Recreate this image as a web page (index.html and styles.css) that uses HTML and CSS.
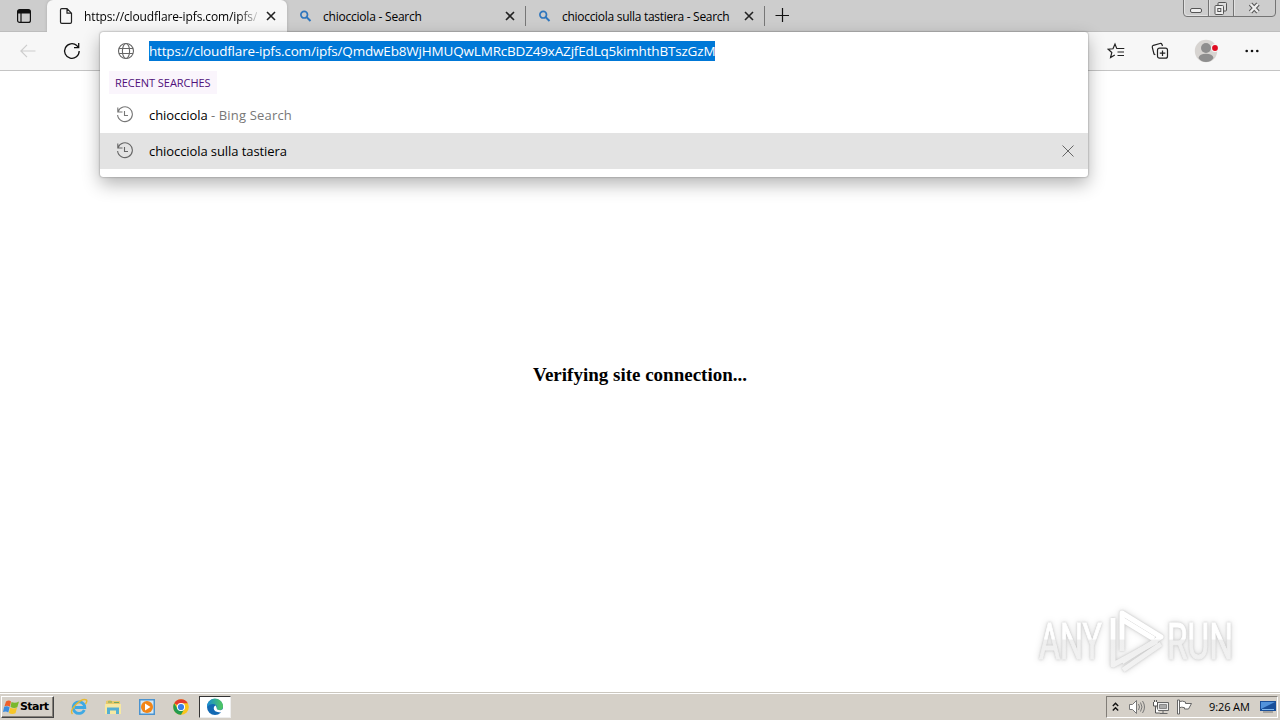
FILE: index.html
```html
<!DOCTYPE html>
<html lang="en">
<head>
<meta charset="utf-8">
<title>Browser desktop</title>
<link rel="stylesheet" href="styles.css">
</head>
<body>
<div class="desktop">
  <header class="tabstrip">
    <div class="tab-actions"><svg width="16" height="16" viewBox="0 0 16 16" fill="none" stroke="#111" stroke-width="1.2"><rect x="1.6" y="1.6" width="12.8" height="12.8" rx="2"/><path d="M2 3h12M2 4.600h12" stroke-width="2"/><path d="M5 5v9"/></svg></div>
    <div class="tab tab-active">
      <svg class="tab-icon" width="14" height="16" viewBox="0 0 14 16" fill="none" stroke="#222" stroke-width="1.2"><path d="M1.500 2q0-1.300 1.300-1.300H8L12.500 5.200V14q0 1.300-1.300 1.300H2.800Q1.500 15.300 1.500 14zM8 .8V5.200h4.400"/></svg>
      <span class="tab-title title-url">https://cloudflare-ipfs.com/ipfs/</span>
      <svg class="tab-close" width="10" height="10" viewBox="0 0 10 10" stroke="#222" stroke-width="1.600"><path d="M1 1l8 8M9 1l-8 8"/></svg>
    </div>
    <div class="tab tab-second">
      <svg class="tab-icon" width="12" height="12" viewBox="0 0 12 12" fill="none" stroke="#2f76bd" stroke-width="1.700"><circle cx="4.200" cy="4.700" r="3.300"/><path d="M6.500 7l4 4" stroke-width="2"/></svg>
      <span class="tab-title title-one">chiocciola - Search</span>
      <svg class="tab-close" width="10" height="10" viewBox="0 0 10 10" stroke="#222" stroke-width="1.600"><path d="M1 1l8 8M9 1l-8 8"/></svg>
    </div>
    <div class="tab tab-third">
      <svg class="tab-icon" width="12" height="12" viewBox="0 0 12 12" fill="none" stroke="#2f76bd" stroke-width="1.700"><circle cx="4.200" cy="4.700" r="3.300"/><path d="M6.500 7l4 4" stroke-width="2"/></svg>
      <span class="tab-title title-two">chiocciola sulla tastiera - Search</span>
      <svg class="tab-close" width="10" height="10" viewBox="0 0 10 10" stroke="#222" stroke-width="1.600"><path d="M1 1l8 8M9 1l-8 8"/></svg>
    </div>
    <svg class="new-tab" width="14" height="14" viewBox="0 0 14 14" stroke="#111" stroke-width="1.200"><path d="M7.500 0v14M.5 7.500h13.500"/></svg>
    <svg class="window-buttons" width="94" height="18" viewBox="0 0 94 18" fill="none" stroke="#747474"><path d="M.5 0v13q0 3.500 3.500 3.500h85q3.500 0 3.500-3.500V0M25.500 0v16M50.500 0v16"/><path d="M1.500 0v12q0 3.500 3 3.500h20M26.500 0v15.500M51.500 0v15.500" stroke="#e2e2e2"/><rect x="7.500" y="8.500" width="11" height="4" rx="1.500" stroke="#555" fill="#eee"/><g stroke="#555"><rect x="35" y="2.500" width="8.500" height="8.500" rx="1" fill="#ddd"/><rect x="32" y="5.500" width="8.500" height="9" rx="1" fill="#eee"/><rect x="34.800" y="8.500" width="3" height="3"/></g><path d="M67.500 4l7.500 8M75 4l-7.500 8" stroke="#555" stroke-width="4.400"/><path d="M67.500 4l7.500 8M75 4l-7.500 8" stroke="#eee" stroke-width="2.400"/></svg>
  </header>

  <nav class="toolbar">
    <svg class="back" width="16" height="14" viewBox="0 0 16 14" fill="none" stroke="#cdcdcd" stroke-width="1.200"><path d="M7 .8L.9 7 7 13.200M1 7h14.500"/></svg>
    <svg class="reload" width="18" height="18" viewBox="0 0 18 18" fill="none" stroke="#111" stroke-width="1.300"><path d="M16.200 9a7.300 7.300 0 1 1-2.400-5.400L15.500 5.500M15.700 1v4.700H11"/></svg>
    <div class="toolbar-right">
      <svg width="18" height="18" viewBox="0 0 18 18" fill="none" stroke="#222" stroke-width="1.200"><path d="M9.800 6.600L8 2 6 6.800 1.200 7.200 4.800 10.500 3.600 15.600 7.800 13M9.500 6.500H17.300M10.500 10H17M10.500 13.500H17"/></svg>
      <svg width="18" height="18" viewBox="0 0 18 18" fill="none" stroke="#222" stroke-width="1.200"><path d="M4.300 12.700L3 12 1.300 5.300Q1 3.800 2.400 3.300L9 1.500Q10.500 1.200 11 2.500L11.500 4"/><rect x="6.500" y="6.200" width="10" height="10" rx="2"/><path d="M11.500 8.500v5.500M8.800 11.200h5.500"/></svg>
      <svg class="avatar" width="24" height="24" viewBox="0 0 24 24"><circle cx="12" cy="12" r="11.200" fill="#d7d4d1"/><circle cx="12" cy="9" r="5" fill="#8e8e8e"/><path d="M4.500 19q1-4.200 7.500-4.200T19.500 19q-2.500 4-7.500 4t-7.500-4" fill="#8e8e8e"/><circle cx="21" cy="9" r="4" fill="#f6f6f6"/><circle cx="21" cy="9" r="2.900" fill="#e00b20"/></svg>
      <svg width="14" height="4" viewBox="0 0 14 4" fill="#111"><circle cx="1.700" cy="2" r="1.300"/><circle cx="7" cy="2" r="1.300"/><circle cx="12.300" cy="2" r="1.300"/></svg>
    </div>
    <section class="suggest">
      <div class="address">
        <svg width="18" height="18" viewBox="0 0 18 18" fill="none" stroke="#666" stroke-width="1.100"><circle cx="9" cy="9" r="7.500"/><ellipse cx="9" cy="9" rx="3.600" ry="7.500"/><path d="M2 6.500h14M2 11.500h14"/></svg>
        <span class="url">https://cloudflare-ipfs.com/ipfs/QmdwEb8WjHMUQwLMRcBDZ49xAZjfEdLq5kimhthBTszGzM</span>
      </div>
      <div class="recent"><span>RECENT SEARCHES</span></div>
      <div class="row">
        <svg width="18" height="18" viewBox="0 0 18 18" fill="none" stroke="#777" stroke-width="1.100"><path d="M1.800 1.500V6H6.500M2 5.700A7.400 7.400 0 1 1 1.600 9M8.500 5V9.500H12"/></svg>
        <span class="query query-one">chiocciola <i>- Bing Search</i></span>
      </div>
      <div class="row row-selected">
        <svg width="18" height="18" viewBox="0 0 18 18" fill="none" stroke="#666" stroke-width="1.100"><path d="M1.800 1.500V6H6.500M2 5.700A7.400 7.400 0 1 1 1.600 9M8.500 5V9.500H12"/></svg>
        <span class="query query-two">chiocciola sulla tastiera</span>
        <svg class="remove" width="12" height="12" viewBox="0 0 12 12" stroke="#666"><path d="M.5 .5l11 11M11.500 .5l-11 11"/></svg>
      </div>
    </section>
  </nav>

  <main class="page">
    <h1>Verifying site connection...</h1>
    <svg class="watermark" width="250" height="90" viewBox="0 0 250 90">
      <defs><linearGradient id="fade" x1="0" x2="0" y1="0" y2="90" gradientUnits="userSpaceOnUse"><stop offset=".49" stop-color="#fff"/><stop offset=".5" stop-color="#efefef"/><stop offset="1" stop-color="#f4f4f4"/></linearGradient></defs>
      <g fill="url(#fade)" stroke="url(#fade)" stroke-width="1">
        <text x="19" y="64" font-size="50" textLength="63" lengthAdjust="spacingAndGlyphs">ANY</text>
        <text x="147" y="64" font-size="50" textLength="66" lengthAdjust="spacingAndGlyphs">RUN</text>
      </g>
      <g fill="none" stroke="url(#fade)" stroke-width="5" stroke-linejoin="round"><path d="M102 56V18L141 42 102 67"/><path d="M93 23V70L137 46"/><path d="M103 75L141 49M103 25L134 44"/></g>
    </svg>
  </main>

  <footer class="taskbar">
    <div class="start">
      <svg width="17" height="16" viewBox="0 0 17 16"><path d="M3 2.500Q6 .5 8 2.500L6.900 7.800Q4.500 5.800 1.500 7.300z" fill="#ee602b"/><path d="M8.500 3Q12 4.700 16 2.500L14.300 8.200Q11 9.800 7.500 8z" fill="#79b82c"/><path d="M1.200 7.800Q4 6.300 6.600 8.300L5.300 13.500Q3 11.700 0 13z" fill="#3b8de0"/><path d="M7.200 8.700Q10 10.300 14 8.700L12.500 14.300Q9 16 5.800 14z" fill="#f6c629"/></svg>
      <b>Start</b>
    </div>
    <div class="launch">
      <svg width="18" height="18" viewBox="0 0 18 18" fill="none"><path d="M14.300 12A5.800 5.800 0 1 1 14.800 9.500H5" stroke="#3fa9e3" stroke-width="2.800"/><path d="M2.500 16Q-.5 13 6 6.500T16.500 2Q17.500 3.500 15.500 6" stroke="#e7b932" stroke-width="1.400"/></svg>
      <svg width="18" height="18" viewBox="0 0 18 18"><path d="M2 3l4-1 2 1h8v6H2z" fill="#e8c968"/><path d="M1 6h16v10H1z" fill="#f6e8a2"/><path d="M3 16V9.500h12V16h-3v-3.500H6V16z" fill="#55afd2"/><path d="M4 4h4M10 4.500h5" stroke="#73a760"/></svg>
      <svg width="18" height="18" viewBox="0 0 18 18"><path d="M1 1h16v16H1z" fill="#4b93cf"/><path d="M2.500 2.500h13v13h-13z" fill="#d5e8f5"/><circle cx="9" cy="9" r="6" fill="#f28516"/><path d="M7 5.500v7l5.500-3.500z" fill="#fff"/></svg>
      <svg width="18" height="18" viewBox="0 0 18 18"><circle cx="9" cy="9" r="7.800" fill="#f9c51c"/><path d="M9 9L2.200 5.200A7.800 7.800 0 0 1 15.800 5.200H9z" fill="#e33b2e"/><path d="M2.200 5.200A7.800 7.800 0 0 0 9 16.800L12.300 11 5.700 11z" fill="#249b50"/><circle cx="9" cy="9" r="4.100" fill="#fff"/><circle cx="9" cy="9" r="3.100" fill="#397fe8"/></svg>
      <div class="task-active"><svg width="18" height="18" viewBox="0 0 18 18"><defs><linearGradient id="edge"><stop stop-color="#178bd5"/><stop offset="1" stop-color="#51ca5a"/></linearGradient></defs><circle cx="9" cy="9" r="8" fill="#1369b3"/><path d="M1 9A8 8 0 0 1 17 8Q17 12.200 13 12.200 10 12 10.600 9.800 11.300 6.700 7.500 6 3.500 5.600 1 9" fill="url(#edge)"/><path d="M10.600 9.800Q10.500 12.300 14.500 12.300L17.500 11 17 14 14.500 14.500Q7.500 14 7.700 10 8 7.800 9.800 7.500z" fill="#fff"/></svg></div>
    </div>
    <div class="tray">
      <svg class="chevrons" width="7" height="10" viewBox="0 0 7 10" fill="none" stroke="#111" stroke-width="1.400"><path d="M.8 4L3.500 1.300 6.200 4M.8 8.500L3.500 5.800 6.200 8.500"/></svg>
      <svg width="18" height="16" viewBox="0 0 18 16" fill="none" stroke="#777"><path d="M1.500 5.500h3l4-4v13l-4-4h-3z" fill="#fff"/><path d="M10.500 5q2 3 0 6M12.500 3.500q3 4.500 0 9M14.500 2q4 6 0 12"/></svg>
      <svg width="18" height="16" viewBox="0 0 18 16" fill="none" stroke="#666"><path d="M5.500 3.500h11v8h-11z" fill="#eee"/><path d="M7.500 5.500h7v4h-7z" fill="#aaa" stroke="#888"/><path d="M7.500 14.500h8M11 12v2"/><path d="M1.500 3v4h4V3M2.500 1v2M4.500 1v2M3.500 7v7h4" stroke="#555" fill="#fff"/></svg>
      <svg width="17" height="16" viewBox="0 0 17 16" fill="#fff" stroke="#666"><path d="M1.500 1h2v14h-2zM3.500 2.500q3-1 6 .5v1.500h6l-3 5.500H8.500V8.700q-3-1-5 0z"/></svg>
      <span class="clock">9:26 AM</span>
      <svg width="16" height="14" viewBox="0 0 16 14"><path d="M0 1h16v10H0z" fill="#194f99"/><path d="M1 2h14L1 9z" fill="#5293db"/><path d="M2 9.500h12" stroke="#80b8ed"/><path d="M3 12h10" stroke="#777"/></svg>
    </div>
  </footer>
</div>
</body>
</html>
```

FILE: styles.css
```css
* { box-sizing: border-box; }
body { margin: 0; overflow: hidden; background: #fff; font-family: "Open Sans", "Noto Sans", sans-serif; color: #000; }
svg { display: block; flex-shrink: 0; }
.desktop { width: 1280px; height: 720px; display: flex; flex-direction: column; }
.tabstrip { height: 32px; display: flex; background: #cdcdcd; border-bottom: 1px solid #bdbdbd; }
.tab-actions { width: 47px; padding: 8px 0 0 16px; }
.tab { height: 32px; display: flex; align-items: center; font-size: 12px; white-space: nowrap; }
.tab-active { width: 240px; background: #f7f7f7; border-radius: 6px 6px 0 0; padding-left: 12px; box-shadow: 0 0 3px #aaa; }
.tab-second { width: 239px; padding-left: 13px; }
.tab-third { width: 239px; padding-left: 13px; }
.tab-second, .tab-third { background: linear-gradient(#777, #777) right 6px / 1px 20px no-repeat; }
.tab-title { margin-left: 11px; width: 176px; overflow: hidden; }
.title-url { letter-spacing: -.12px; margin-left: 11px; width: 173px; mask-image: linear-gradient(90deg, #000 154px, transparent 177px); }
.title-one { letter-spacing: -.22px; width: 181px; }
.title-two { letter-spacing: -.29px; width: 181px; }
.tab-close { margin-left: 9px; }
.tab-second .tab-close, .tab-third .tab-close { margin-left: 1px; }
.new-tab { margin: 8px 0 0 10px; }
.window-buttons { margin-left: auto; margin-right: 3px; }
.toolbar { height: 39px; background: #f7f7f7; border-bottom: 1px solid #c4c4c4; display: flex; align-items: center; position: relative; z-index: 2; }
.back { margin-left: 20px; }
.reload { margin-left: 27px; }
.toolbar-right { margin-left: auto; display: flex; align-items: center; padding-right: 21px; }
.toolbar-right > svg + svg { margin-left: 26px; }
.toolbar-right > svg + .avatar { margin-left: 25px; }
.toolbar-right > .avatar + svg { margin-left: 27px; }
.suggest { position: absolute; left: 100px; top: 0; width: 988px; height: 145px; background: #fff; border-radius: 3px; box-shadow: 0 0 2px #777, 0 7px 18px rgba(0,0,0,.3); font-size: 13px; white-space: nowrap; }
.address { height: 38px; display: flex; align-items: center; padding-left: 17px; }
.url { margin-left: 14px; height: 20px; line-height: 20px; background: #0078d7; color: #fff; letter-spacing: -.18px; font-size: 13.5px; }
.recent { height: 27px; padding: 1px 0 0 9px; }
.recent span { display: inline-block; height: 23px; line-height: 24px; padding: 0 6px; background: #faf5fc; color: #50107a; font-size: 11px; letter-spacing: -.04px; vertical-align: top; }
.row { height: 36px; display: flex; align-items: center; padding: 0 14px 0 16px; }
.row-selected { background: #e3e3e3; }
.query { margin-left: 15px; letter-spacing: -.08px; }
.query i { font-style: normal; color: #777; letter-spacing: .18px; }
.remove { margin-left: auto; }
.page { height: 621px; position: relative; }
.page h1 { margin: 0; padding-top: 292px; text-align: center; font: bold 19px/23px "Liberation Serif", serif; color: #000; }
.watermark { position: absolute; left: 1020px; top: 524px; font-family: "Roboto", sans-serif; filter: drop-shadow(0 0 1px #c4c4c4) drop-shadow(0 0 3px #ddd); }
.taskbar { height: 28px; background: #d5d0c8; border-top: 1px solid #cbc7bf; display: flex; align-items: center; box-shadow: inset 0 1px #fff; }
.start { width: 53px; height: 22px; display: flex; align-items: center; background: #d5d0c8; border: 1px solid; border-color: #fff #444 #444 #fff; box-shadow: inset -1px -1px #858079; padding-left: 1px; margin: 0 0 0 1px; }
.start b { font: bold 11px "DejaVu Sans", sans-serif; letter-spacing: -.55px; color: #000; }
.launch { display: flex; align-items: center; padding-left: 16px; gap: 16px; }
.task-active { width: 32px; height: 22px; background: #fff; border: 1px solid; border-color: #333 #eee #eee #333; display: flex; justify-content: center; align-items: center; margin-left: -7px; }
.tray { margin: 0 2px 0 auto; height: 22px; width: 172px; border: 1px solid; border-color: #817d77 #fff #fff #817d77; display: flex; align-items: center; padding-left: 5px; gap: 6px; }
.chevrons { margin-right: 3px; }
.clock { font-size: 11px; width: 45px; letter-spacing: -.1px; white-space: nowrap; margin-left: 10px; color: #000; }
```
